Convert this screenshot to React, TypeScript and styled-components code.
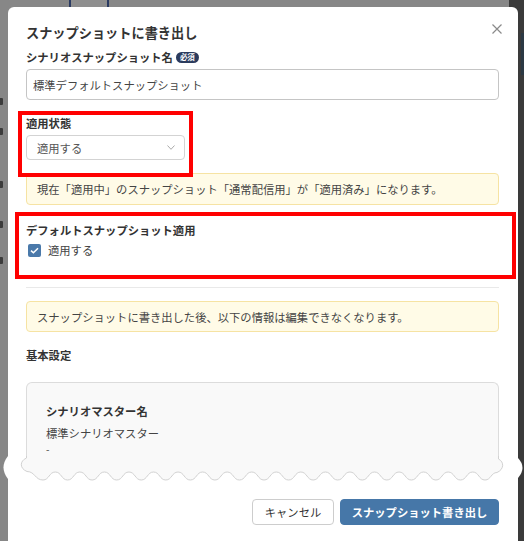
import styled, { createGlobalStyle } from "styled-components";

const GlobalStyle = createGlobalStyle`
  html, body {
    margin: 0;
    padding: 0;
  }
  body {
    font-family: "Noto Sans CJK JP", "Noto Sans", sans-serif;
    color: #333;
  }
  * {
    box-sizing: border-box;
  }
`;

const Screen = styled.div`
  position: relative;
  width: 524px;
  height: 541px;
  overflow: hidden;
  padding: 7px 0 0 8px;
  background: linear-gradient(90deg, #878787 0, #878787 509px, #3a3a3a 509px);
`;

const TopTab = styled.div`
  position: absolute;
  left: 69px;
  top: -3px;
  width: 40px;
  height: 12px;
  border: 2px solid #2b3b62;
  background: #8f8f8f;
`;

const SideMark = styled.div<{ $top: number }>`
  position: absolute;
  left: 0;
  top: ${(p) => p.$top}px;
  width: 3px;
  height: 7px;
  border-radius: 0 1px 1px 0;
  background: #3c3c3c;
`;

const EdgeStrip = styled.div`
  position: absolute;
  right: 0;
  top: 33px;
  width: 3px;
  height: 42px;
  background: #2c3944;
`;

const Modal = styled.div`
  position: relative;
  width: 510px;
  background: #fff;
  border-radius: 6px 6px 0 0;
  padding: 16px 19px 24px 18px;
  font-size: 11.3px;
`;

const Header = styled.div`
  display: flex;
  justify-content: space-between;
  align-items: flex-start;
  height: 20px;
`;

const Title = styled.h2`
  margin: 0;
  font-size: 13.2px;
  line-height: 20px;
  font-weight: 700;
  color: #333;
`;

const CloseButton = styled.button`
  display: flex;
  width: 10px;
  height: 10px;
  margin: 1px -3px 0 0;
  padding: 0;
  border: 0;
  background: none;
  cursor: pointer;
`;

const Label = styled.div<{ $gap: number }>`
  display: flex;
  align-items: center;
  gap: 3px;
  margin-top: ${(p) => p.$gap}px;
  height: 18px;
  line-height: 18px;
  font-weight: 700;
  color: #333;
`;

const Required = styled.span`
  display: inline-flex;
  align-items: center;
  justify-content: center;
  width: 23px;
  height: 11px;
  border-radius: 6px;
  background: #2b3b5e;
  color: #fff;
  font-size: 7.5px;
  font-weight: 700;
  line-height: 1;
`;

const TextInput = styled.input`
  display: block;
  width: 100%;
  height: 31px;
  margin-top: 3px;
  padding: 0 6px;
  border: 1px solid #c5c5c5;
  border-radius: 4px;
  font: inherit;
  color: #444;
  background: #fff;
  outline: none;
`;

const Select = styled.div`
  display: flex;
  align-items: center;
  justify-content: space-between;
  width: 159px;
  height: 25px;
  margin-top: 3px;
  padding: 0 9px 0 10px;
  border: 1px solid #d3d3d3;
  border-radius: 4px;
  color: #555;
`;

const Notice = styled.div<{ $gap: number; $height: number }>`
  display: flex;
  align-items: center;
  height: ${(p) => p.$height}px;
  margin-top: ${(p) => p.$gap}px;
  padding: 0 10px;
  background: #fffbe7;
  border: 1px solid #f6e3a3;
  border-radius: 4px;
  color: #444;
`;

const CheckRow = styled.label`
  display: flex;
  align-items: center;
  gap: 7px;
  height: 18px;
  margin-top: 2px;
  padding-left: 2px;
  color: #444;
`;

const CheckBox = styled.span`
  display: flex;
  align-items: center;
  justify-content: center;
  width: 13px;
  height: 13px;
  border-radius: 2px;
  background: #4a79aa;
`;

const Divider = styled.hr`
  height: 0;
  margin: 28px 0 0;
  border: 0;
  border-top: 1px solid #e9e9e9;
`;

const Card = styled.div`
  height: 76px;
  margin-top: 18px;
  padding: 19px 19px 0;
  background: #f9f9f9;
  border: 1px solid #dcdcdc;
  border-bottom: 0;
  border-radius: 6px 6px 0 0;
`;

const CardTitle = styled.div`
  height: 18px;
  line-height: 18px;
  font-weight: 700;
  color: #333;
`;

const CardValue = styled.div`
  margin-top: 6px;
  line-height: 15px;
  color: #444;
`;

const CardNote = styled.div`
  margin-top: 1px;
  font-size: 10px;
  line-height: 14px;
  color: #444;
`;

const Footer = styled.div`
  display: flex;
  justify-content: flex-end;
  gap: 6px;
  margin-top: 41px;
`;

const Button = styled.button<{ $primary?: boolean }>`
  height: 26px;
  width: ${(p) => (p.$primary ? 159 : 82)}px;
  padding: 0;
  border: 1px solid ${(p) => (p.$primary ? "#4677a8" : "#cdcdcd")};
  border-radius: 4px;
  background: ${(p) => (p.$primary ? "#4677a8" : "#fff")};
  color: ${(p) => (p.$primary ? "#fff" : "#333")};
  font: inherit;
  font-weight: ${(p) => (p.$primary ? 700 : 400)};
  cursor: pointer;
`;

const Highlight = styled.div<{ $x: number; $y: number; $w: number; $h: number }>`
  position: absolute;
  left: ${(p) => p.$x}px;
  top: ${(p) => p.$y}px;
  width: ${(p) => p.$w}px;
  height: ${(p) => p.$h}px;
  border: 4px solid #ff0000;
  pointer-events: none;
  z-index: 2;
`;

const TearLayer = styled.svg`
  position: absolute;
  left: 0;
  top: 450px;
  width: 524px;
  height: 36px;
  pointer-events: none;
  z-index: 1;
`;

// torn edge across the card: troughs at y 480, crests at y 472
const buildWave = () => {
  const pts: [number, number][] = [[27, 471.5]];
  const start = 43;
  const end = 485;
  const n = 18;
  const step = (end - start) / n;
  for (let k = 0; k <= n; k++) {
    const t = start + k * step;
    pts.push([t, 480]);
    if (k < n) pts.push([t + step / 2, 472]);
  }
  pts.push([497, 472.5]);
  let d = "";
  for (let i = 1; i < pts.length; i++) {
    const [x0, y0] = pts[i - 1];
    const [x1, y1] = pts[i];
    const h = (x1 - x0) / 2;
    d += ` C${x0 + h},${y0} ${x1 - h},${y1} ${x1},${y1}`;
  }
  return d;
};

const wave = buildWave();
const edge =
  "L26.5,458 C19.5,461 19.5,468.5 27,471.5" +
  wave +
  " C504,469.5 504.5,462 498.5,459";

const Tear = () => (
  <TearLayer viewBox="0 450 524 36">
    <path d={`M8,457 ${edge} L518,459 L518,486 L8,486 Z`} fill="#fff" />
    <path d="M8,456 Q-1,467.5 8,479 Z" fill="#fff" />
    <path d="M518,458 Q527,467.5 518,478 Z" fill="#fff" />
    <path d={`M26.5,456 ${edge} L498.5,456 Z`} fill="#f9f9f9" />
    <path d={`M26.5,456 ${edge} L498.5,456`} fill="none" stroke="#d2d2d2" strokeWidth="1" />
  </TearLayer>
);

export default function App() {
  return (
    <>
      <GlobalStyle />
      <Screen>
        <TopTab />
        {[98, 128, 181, 221, 257].map((t) => (
          <SideMark key={t} $top={t} />
        ))}
        <EdgeStrip />

        <Modal>
          <Header>
            <Title>スナップショットに書き出し</Title>
            <CloseButton aria-label="閉じる">
              <svg width="10" height="10" viewBox="0 0 10 10">
                <path d="M0.5 0.5 L9.5 9.5 M9.5 0.5 L0.5 9.5" stroke="#8a8a8a" strokeWidth="1.2" />
              </svg>
            </CloseButton>
          </Header>

          <Label $gap={5}>
            シナリオスナップショット名
            <Required>必須</Required>
          </Label>
          <TextInput readOnly value="標準デフォルトスナップショット" />

          <Label $gap={14}>適用状態</Label>
          <Select>
            <span>適用する</span>
            <svg width="8" height="5" viewBox="0 0 8 5">
              <polyline points="0.5,0.5 4,4.3 7.5,0.5" fill="none" stroke="#aaa" strokeWidth="1" />
            </svg>
          </Select>

          <Notice $gap={13} $height={32}>
            現在「適用中」のスナップショット「通常配信用」が「適用済み」になります。
          </Notice>

          <Label $gap={16}>デフォルトスナップショット適用</Label>
          <CheckRow>
            <CheckBox>
              <svg width="9" height="7" viewBox="0 0 9 7">
                <polyline points="1,3.6 3.4,5.8 8,1.2" fill="none" stroke="#fff" strokeWidth="1.5" />
              </svg>
            </CheckBox>
            適用する
          </CheckRow>

          <Divider />

          <Notice $gap={13} $height={31}>
            スナップショットに書き出した後、以下の情報は編集できなくなります。
          </Notice>

          <Label $gap={14}>基本設定</Label>

          <Card>
            <CardTitle>シナリオマスター名</CardTitle>
            <CardValue>標準シナリオマスター</CardValue>
            <CardNote>-</CardNote>
          </Card>

          <Footer>
            <Button>キャンセル</Button>
            <Button $primary>スナップショット書き出し</Button>
          </Footer>
        </Modal>

        <Tear />
        <Highlight $x={18} $y={111} $w={175} $h={66} />
        <Highlight $x={15} $y={212} $w={501} $h={67} />
      </Screen>
    </>
  );
}
